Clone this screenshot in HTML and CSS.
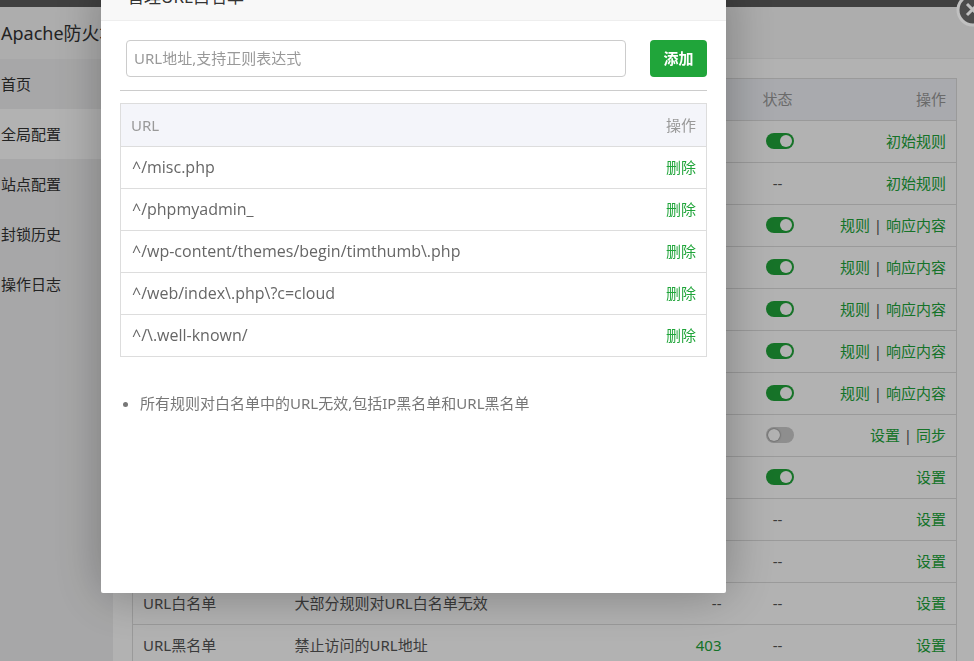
FILE: index.html
```
<!DOCTYPE html>
<html lang="zh-CN">
<head>
    <meta charset="UTF-8">
    <meta name="viewport" content="width=device-width, initial-scale=1.0">
    <title>Apache防火墙</title>
    <link rel="stylesheet" href="styles.css">
</head>
<body>
    <!-- Firewall settings window -->
    <div class="window">
        <nav class="sidebar">
            <h1 class="sidebar-title">Apache防火墙</h1>
            <a href="#" class="menu-item">首页</a>
            <a href="#" class="menu-item active">全局配置</a>
            <a href="#" class="menu-item">站点配置</a>
            <a href="#" class="menu-item">封锁历史</a>
            <a href="#" class="menu-item">操作日志</a>
        </nav>
        <main class="content">
            <div class="content-head"></div>
            <table class="rule-table">
                <thead>
                    <tr><th class="col-name"></th><th class="col-desc"></th><th class="col-code"></th><th class="col-state">状态</th><th class="col-action">操作</th></tr>
                </thead>
                <tbody>
                    <tr><td></td><td></td><td></td><td><input type="checkbox" class="switch" aria-label="状态" checked></td><td><a href="#">初始规则</a></td></tr>
                    <tr><td></td><td></td><td></td><td>--</td><td><a href="#">初始规则</a></td></tr>
                    <tr><td></td><td></td><td></td><td><input type="checkbox" class="switch" aria-label="状态" checked></td><td><a href="#">规则</a> | <a href="#">响应内容</a></td></tr>
                    <tr><td></td><td></td><td></td><td><input type="checkbox" class="switch" aria-label="状态" checked></td><td><a href="#">规则</a> | <a href="#">响应内容</a></td></tr>
                    <tr><td></td><td></td><td></td><td><input type="checkbox" class="switch" aria-label="状态" checked></td><td><a href="#">规则</a> | <a href="#">响应内容</a></td></tr>
                    <tr><td></td><td></td><td></td><td><input type="checkbox" class="switch" aria-label="状态" checked></td><td><a href="#">规则</a> | <a href="#">响应内容</a></td></tr>
                    <tr><td></td><td></td><td></td><td><input type="checkbox" class="switch" aria-label="状态" checked></td><td><a href="#">规则</a> | <a href="#">响应内容</a></td></tr>
                    <tr><td></td><td></td><td></td><td><input type="checkbox" class="switch" aria-label="状态"></td><td><a href="#">设置</a> | <a href="#">同步</a></td></tr>
                    <tr><td></td><td></td><td></td><td><input type="checkbox" class="switch" aria-label="状态" checked></td><td><a href="#">设置</a></td></tr>
                    <tr><td></td><td></td><td></td><td>--</td><td><a href="#">设置</a></td></tr>
                    <tr><td></td><td></td><td></td><td>--</td><td><a href="#">设置</a></td></tr>
                    <tr><td>URL白名单</td><td>大部分规则对URL白名单无效</td><td>--</td><td>--</td><td><a href="#">设置</a></td></tr>
                    <tr><td>URL黑名单</td><td>禁止访问的URL地址</td><td><a href="#">403</a></td><td>--</td><td><a href="#">设置</a></td></tr>
                </tbody>
            </table>
        </main>
    </div>

    <div class="shade"></div>

    <button class="close-button" aria-label="关闭">
        <svg width="34" height="34" viewBox="0 0 34 34">
            <circle cx="17" cy="17" r="15" fill="#4c4c4c" stroke="#c0c0c0" stroke-width="3"/>
            <path d="M11 11L22 22M22 11L11 22" stroke="#c0c0c0" stroke-width="3"/>
        </svg>
    </button>

    <!-- URL whitelist dialog -->
    <div class="dialog" role="dialog" aria-labelledby="dialogTitle">
        <h2 class="dialog-title" id="dialogTitle">管理URL白名单</h2>
        <div class="dialog-body">
            <form class="add-form">
                <input type="text" class="url-input" aria-label="URL地址" placeholder="URL地址,支持正则表达式">
                <button type="button" class="add-button">添加</button>
            </form>
            <table class="url-table">
                <thead>
                    <tr><th>URL</th><th>操作</th></tr>
                </thead>
                <tbody>
                    <tr><td>^/misc.php</td><td><a href="#">删除</a></td></tr>
                    <tr><td>^/phpmyadmin_</td><td><a href="#">删除</a></td></tr>
                    <tr><td>^/wp-content/themes/begin/timthumb\.php</td><td><a href="#">删除</a></td></tr>
                    <tr><td>^/web/index\.php\?c=cloud</td><td><a href="#">删除</a></td></tr>
                    <tr><td>^/\.well-known/</td><td><a href="#">删除</a></td></tr>
                </tbody>
            </table>
            <ul class="tips">
                <li>所有规则对白名单中的URL无效,包括IP黑名单和URL黑名单</li>
            </ul>
        </div>
    </div>
</body>
</html>
```

FILE: styles.css
```
* {
    box-sizing: border-box;
}

body {
    margin: 0;
    height: 100vh;
    overflow: hidden;
    background: #5c5c5c;
    color: #555;
    font-family: "Noto Sans", "Noto Sans CJK SC", sans-serif;
    font-size: 15px;
    line-height: 20px;
}

a {
    color: #20a53a;
    text-decoration: none;
}

table {
    width: 100%;
    border-collapse: collapse;
}

th {
    font-weight: normal;
    color: #999;
    text-align: left;
}

/* Settings window */
.window {
    display: flex;
    margin-top: 7px;
    background: #fff;
}

.sidebar {
    width: 113px;
    flex-shrink: 0;
    background: #f0f0f1;
}

.sidebar-title {
    height: 52px;
    margin: 0;
    padding-left: 1px;
    background: #f8f8f8;
    color: #333;
    font-size: 18px;
    font-weight: normal;
    line-height: 52px;
    white-space: nowrap;
}

.menu-item {
    display: block;
    padding: 15px 1px;
    color: #333;
}

.menu-item.active {
    background: #fff;
}

.content {
    flex: 1;
}

.content-head {
    height: 52px;
    background: #f8f8f8;
    border-bottom: 1px solid #eee;
}

.rule-table {
    width: auto;
    min-width: calc(100% - 36px);
    margin: 19px 17px 0 19px;
    table-layout: fixed;
}

.rule-table th,
.rule-table td {
    height: 42px;
    padding: 0 10px 2px;
    border-bottom: 1px solid #ddd;
    white-space: nowrap;
}

.rule-table,
.url-table {
    border: 1px solid #ddd;
}

.rule-table th {
    background: #f2f4f9;
}

.col-name {
    width: 152px;
}

.col-code {
    width: 90px;
}

.col-state {
    width: 92px;
}

.col-action {
    width: 133px;
}

.rule-table th:nth-child(3),
.rule-table td:nth-child(3),
.rule-table th:nth-child(5),
.rule-table td:nth-child(5) {
    text-align: right;
}

.rule-table th:nth-child(4),
.rule-table td:nth-child(4) {
    text-align: center;
}

.switch {
    appearance: none;
    width: 28px;
    height: 16px;
    margin: 0 0 2px 4px;
    padding: 2px;
    border-radius: 8px;
    background: #ccc;
    vertical-align: middle;
}

.switch::before {
    content: "";
    display: block;
    width: 12px;
    height: 12px;
    border-radius: 50%;
    background: #fff;
    box-shadow: 0 0 2px #555;
}

.switch:checked {
    background: #20a53a;
}

.switch:checked::before {
    margin-left: auto;
    box-shadow: none;
}

.shade {
    position: fixed;
    inset: 0;
    background: rgba(0, 0, 0, 0.3);
}

.close-button {
    position: fixed;
    top: -7px;
    right: -16px;
    width: 34px;
    height: 34px;
    padding: 0;
    border: none;
    background: none;
}

/* Dialog */
.dialog {
    position: fixed;
    top: -22px;
    left: 101px;
    width: 625px;
    min-height: 615px;
    border-radius: 2px;
    background: #fff;
    box-shadow: 1px 1px 50px rgba(0, 0, 0, 0.3);
}

.dialog-title {
    height: 43px;
    margin: 0;
    padding: 0 26px;
    border-bottom: 1px solid #eee;
    background: #f8f8f8;
    color: #333;
    font-size: 17px;
    font-weight: normal;
    line-height: 38px;
}

.dialog-body {
    padding: 19px 19px 0;
}

.add-form {
    display: flex;
    gap: 24px;
    padding: 0 0 13px 6px;
    border-bottom: 1px solid #ccc;
}

.url-input {
    flex: 1;
    height: 37px;
    padding: 0 7px 2px;
    border: 1px solid #ccc;
    border-radius: 4px;
    font: inherit;
}

.url-input::placeholder {
    color: #999;
}

.add-button {
    width: 57px;
    height: 37px;
    padding: 0 0 2px;
    border: none;
    border-radius: 4px;
    background: #20a53a;
    color: #fff;
    font: inherit;
    font-weight: bold;
}

.url-table {
    margin-top: 12px;
}

.url-table th,
.url-table td {
    height: 42px;
    padding: 0 10px 2px 11px;
    border-bottom: 1px solid #ddd;
    color: #666;
}

.url-table td:first-child {
    font-family: "Open Sans", sans-serif;
    font-size: 16px;
}

.url-table th {
    height: 43px;
    padding: 0 10px;
    background: #f4f5fa;
    color: #999;
}

.url-table th:last-child,
.url-table td:last-child {
    text-align: right;
}

.tips {
    margin: 36px 0 0;
    padding-left: 20px;
    color: #777;
}
```
